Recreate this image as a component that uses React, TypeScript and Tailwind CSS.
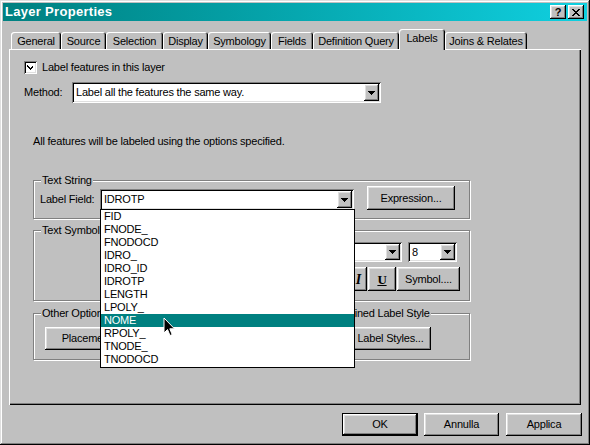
import React from "react";

const raised =
  "shadow-[inset_-1px_-1px_#000,inset_1px_1px_#fff,inset_-2px_-2px_#808080,inset_2px_2px_#dfdfdf]";
const sunken =
  "shadow-[inset_1px_1px_#808080,inset_-1px_-1px_#fff,inset_2px_2px_#000,inset_-2px_-2px_#dfdfdf]";
const etched =
  "border border-[#808080] shadow-[1px_1px_0_0_#fff,inset_1px_1px_0_0_#fff]";

function DownArrow() {
  return (
    <svg width="7" height="4" viewBox="0 0 7 4" shapeRendering="crispEdges">
      <rect x="0" y="0" width="7" height="1" fill="#000" />
      <rect x="1" y="1" width="5" height="1" fill="#000" />
      <rect x="2" y="2" width="3" height="1" fill="#000" />
      <rect x="3" y="3" width="1" height="1" fill="#000" />
    </svg>
  );
}

function Combo({ className, value }: { className: string; value: string }) {
  return (
    <div className={`${className} bg-white ${sunken} flex items-stretch p-[2px]`}>
      <span className="flex-1 flex items-center pl-[2px] leading-[13px] whitespace-nowrap overflow-hidden">
        {value}
      </span>
      <div className={`w-[15px] bg-[#c0c0c0] ${raised} flex items-center justify-center`}>
        <DownArrow />
      </div>
    </div>
  );
}

function Btn({ className, children }: { className: string; children?: React.ReactNode }) {
  return (
    <div className={`${className} bg-[#c0c0c0] ${raised} flex items-center leading-[13px] whitespace-nowrap`}>
      {children}
    </div>
  );
}

function Group({
  className,
  legend,
  children,
}: {
  className: string;
  legend: string;
  children?: React.ReactNode;
}) {
  return (
    <div className={`${className} ${etched} relative`}>
      <span className="absolute left-[7px] top-[-7px] px-[1px] bg-[#c0c0c0] leading-[13px] whitespace-nowrap">
        {legend}
      </span>
      {children}
    </div>
  );
}

const tabs: { label: string; w: string; sel?: boolean }[] = [
  { label: "General", w: "w-[50px]" },
  { label: "Source", w: "w-[45px]" },
  { label: "Selection", w: "w-[57px]" },
  { label: "Display", w: "w-[45px]" },
  { label: "Symbology", w: "w-[63px]" },
  { label: "Fields", w: "w-[42px]" },
  { label: "Definition Query", w: "w-[86px]" },
  { label: "Labels", w: "w-[46px]", sel: true },
  { label: "Joins & Relates", w: "w-[82px]" },
];

const fields = [
  "FID",
  "FNODE_",
  "FNODOCD",
  "IDRO_",
  "IDRO_ID",
  "IDROTP",
  "LENGTH",
  "LPOLY_",
  "NOME",
  "RPOLY_",
  "TNODE_",
  "TNODOCD",
];

export default function App() {
  return (
    <div className="w-[590px] h-[445px] bg-[#c0c0c0] p-[3px] relative overflow-hidden flex flex-col text-black text-[11px] tracking-[-0.2px] font-['Liberation_Sans',Arial,sans-serif] shadow-[inset_-1px_-1px_#000,inset_1px_1px_#dfdfdf,inset_-2px_-2px_#808080,inset_2px_2px_#fff]">
      {/* Title bar */}
      <div className="h-[18px] shrink-0 bg-linear-to-r from-[#008080] to-[#10d0e0] flex items-center pl-[2px] pr-[3px]">
        <span className="text-white font-bold text-[13px] tracking-[0.3px] leading-[16px]">
          Layer Properties
        </span>
        <div className="ml-auto flex gap-[2px]">
          <div className={`w-[16px] h-[14px] bg-[#c0c0c0] ${raised} flex items-center justify-center`}>
            <span className="font-bold text-[11px] leading-[11px] tracking-normal">?</span>
          </div>
          <div className={`w-[16px] h-[14px] bg-[#c0c0c0] ${raised} flex items-center justify-center`}>
            <svg width="8" height="7" viewBox="0 0 8 7" shapeRendering="crispEdges">
              <path d="M0 0h2v1h1v1h2V1h1V0h2v1H7v1H6v1H5v1h1v1h1v1h1v1H6V6H5V5H3v1H2v1H0V6h1V5h1V4h1V3H2V2H1V1H0z" fill="#000" />
            </svg>
          </div>
        </div>
      </div>

      {/* Tabs */}
      <div className="ml-[8px] mt-[8px] h-[20px] flex items-end shrink-0">
        {tabs.map((t) => (
          <div
            key={t.label}
            className={`${t.w} bg-[#c0c0c0] rounded-t-[3px] flex justify-center pt-[3px] whitespace-nowrap leading-[13px] ${
              t.sel
                ? "h-[21px] mb-[-1px] relative z-10 shadow-[inset_1px_1px_#fff,inset_-1px_0_#000,inset_-2px_0_#808080]"
                : "h-[17px] shadow-[inset_1px_1px_#fff,inset_-1px_0_#000,inset_-2px_0_#808080]"
            }`}
          >
            {t.label}
          </div>
        ))}
      </div>

      {/* Panel */}
      <div className="ml-[6px] w-[572px] h-[356px] shrink-0 bg-[#c0c0c0] shadow-[inset_1px_1px_#fff,inset_-1px_-1px_#000,inset_-2px_-2px_#808080] pt-[12px] pl-[15px] flex flex-col">
        <div className="h-[13px] flex items-center gap-[5px]">
          <div className={`w-[13px] h-[13px] bg-white ${sunken} flex items-center justify-center`}>
            <svg width="7" height="7" viewBox="0 0 7 7" shapeRendering="crispEdges">
              <path d="M6 0v3L3 6 0 3V1l3 3 3-3z" fill="#000" />
            </svg>
          </div>
          <span className="leading-[13px]">Label features in this layer</span>
        </div>

        <div className="mt-[8px] h-[21px] flex items-center">
          <span className="w-[48px] leading-[13px]">Method:</span>
          <Combo className="w-[309px] h-[21px]" value="Label all the features the same way." />
        </div>

        <div className="mt-[32px] ml-[9px] leading-[13px] h-[13px]">
          All features will be labeled using the options specified.
        </div>

        <div className="ml-[9px] flex flex-col">
          {/* Text String */}
          <Group className="mt-[32px] w-[437px] h-[39px]" legend="Text String">
            <div className="flex items-start pl-[6px] pt-[5px]">
              <div className="mt-[3px] h-[21px] flex items-center">
                <span className="w-[60px] leading-[13px]">Label Field:</span>
                <Combo className="w-[254px] h-[21px]" value="IDROTP" />
              </div>
              <Btn className="ml-[13px] w-[88px] h-[24px] justify-center">Expression...</Btn>
            </div>
          </Group>

          {/* Text Symbol */}
          <Group className="mt-[11px] w-[437px] h-[71px]" legend="Text Symbol">
            <div className="flex flex-col items-end pt-[11px]">
              <div className="flex gap-[6px] mr-[12px]">
                <Combo className="w-[150px] h-[20px]" value="Arial" />
                <Combo className="w-[49px] h-[20px]" value="8" />
              </div>
              <div className="flex gap-[1px] mt-[5px] mr-[9px]">
                <Btn className="w-[28px] h-[24px] justify-center">
                  <span className="font-bold font-['Liberation_Serif',serif] text-[13px]">B</span>
                </Btn>
                <Btn className="w-[28px] h-[24px] justify-end pr-[6px]">
                  <span className="font-bold italic font-['Liberation_Serif',serif] text-[14px]">I</span>
                </Btn>
                <Btn className="w-[28px] h-[24px] justify-center">
                  <span className="font-bold underline font-['Liberation_Serif',serif] text-[13px]">U</span>
                </Btn>
                <Btn className="w-[63px] h-[24px] justify-center">Symbol....</Btn>
              </div>
            </div>
          </Group>

          {/* Bottom groups */}
          <div className="mt-[12px] flex gap-[8px]">
            <Group className="w-[270px] h-[47px]" legend="Other Options">
              <div className="pt-[13px] pl-[11px]">
                <Btn className="w-[143px] h-[23px] justify-center">Placement Properties...</Btn>
              </div>
            </Group>
            <Group className="w-[159px] h-[47px]" legend="Pre-defined Label Style">
              <div className="pt-[13px] flex justify-center">
                <Btn className="w-[81px] h-[23px] justify-center">Label Styles...</Btn>
              </div>
            </Group>
          </div>
        </div>
      </div>

      {/* Dialog buttons */}
      <div className="mt-[8px] flex justify-end mr-[5px]">
        <div className="w-[76px] h-[23px] border border-black">
          <Btn className="w-full h-full justify-center">OK</Btn>
        </div>
        <Btn className="ml-[6px] w-[75px] h-[23px] justify-center">Annulla</Btn>
        <Btn className="ml-[7px] w-[76px] h-[23px] justify-center">Applica</Btn>
      </div>

      {/* Open drop-down list */}
      <div className="absolute left-[100px] top-[209px] w-[255px] h-[159px] bg-white border border-black py-0 z-20">
        {fields.map((f) => (
          <div
            key={f}
            className={`h-[13px] leading-[13px] pl-[3px] ${f === "NOME" ? "bg-[#008080] text-white" : ""}`}
          >
            {f}
          </div>
        ))}
      </div>

      {/* Mouse cursor */}
      <svg
        className="absolute left-[163px] top-[317px] z-30"
        width="13"
        height="21"
        viewBox="0 0 13 21"
      >
        <path
          d="M1 1 L1 16 L4.5 12.5 L7 18.5 L9.2 17.6 L6.8 11.8 L11.5 11.8 Z"
          fill="#000"
          stroke="#fff"
          strokeWidth="1"
          strokeLinejoin="miter"
        />
      </svg>
    </div>
  );
}
